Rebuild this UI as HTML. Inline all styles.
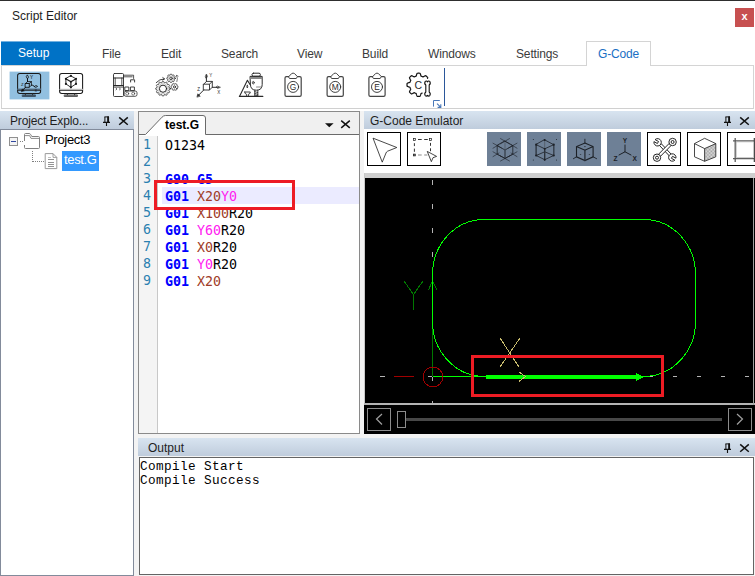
<!DOCTYPE html>
<html><head><meta charset="utf-8"><title>Script Editor</title>
<style>
html,body{margin:0;padding:0;}
body{width:755px;height:576px;position:relative;overflow:hidden;background:#fff;font-family:"Liberation Sans",sans-serif;font-size:12px;color:#1e1e1e;}
.a{position:absolute;}
.t{position:absolute;white-space:nowrap;line-height:14px;}
.tb{letter-spacing:-0.15px;}
.hdr{position:absolute;background:linear-gradient(#d8e4f0,#bfccdc);}
.code{position:absolute;left:165px;white-space:pre;font-family:"DejaVu Sans Mono","Liberation Mono",monospace;font-size:13.3px;line-height:17px;height:17px;color:#000;}
.ln{position:absolute;left:143px;width:9px;text-align:left;font-family:"DejaVu Sans Mono","Liberation Mono",monospace;font-size:13.3px;line-height:17px;height:17px;color:#2b80b0;}
.g{color:#0000ff;font-weight:bold;}
.x{color:#a03c28;}
.y{color:#ff20f0;}
.out{position:absolute;left:140px;white-space:pre;font-family:"Liberation Mono",monospace;font-size:12.7px;letter-spacing:0.38px;line-height:14px;color:#000;}
.gl{position:absolute;font-family:"Liberation Sans","NanumGothic",sans-serif;font-size:12px;line-height:14px;white-space:nowrap;}
</style></head><body>
<!-- top line -->
<div class="a" style="left:0;top:0;width:755px;height:1px;background:#2e2e2e"></div>
<div class="t" style="left:12px;top:9px;font-size:12px;color:#1e1e1e">Script Editor</div>
<!-- close -->
<div class="a" style="left:735px;top:8px;width:19px;height:19px;background:#c75050"></div>
<div class="t" style="left:735px;top:9px;width:19px;text-align:center;color:#fff;font-weight:bold;font-size:11px;line-height:14px">x</div>
<!-- tabs -->
<div class="a" style="left:1px;top:41px;width:69px;height:1px;background:#73b1e0"></div>
<div class="a" style="left:1px;top:42px;width:69px;height:23px;background:#0072c6"></div>
<div class="t" style="left:18px;top:46px;color:#fff;font-size:12px">Setup</div>
<div class="t tb" style="left:102px;top:47px;color:#3b3b3b">File</div>
<div class="t tb" style="left:161px;top:47px;color:#3b3b3b">Edit</div>
<div class="t tb" style="left:221px;top:47px;color:#3b3b3b">Search</div>
<div class="t tb" style="left:297px;top:47px;color:#3b3b3b">View</div>
<div class="t tb" style="left:362px;top:47px;color:#3b3b3b">Build</div>
<div class="t tb" style="left:428px;top:47px;color:#3b3b3b">Windows</div>
<div class="t tb" style="left:516px;top:47px;color:#3b3b3b">Settings</div>
<!-- ribbon panel -->
<div class="a" style="left:1px;top:65px;width:753px;height:44px;border:1px solid #d4d4d4;box-sizing:border-box;border-bottom-color:#d0d0d0;background:#fff"></div>
<div class="a" style="left:586px;top:41px;width:65px;height:25px;border:1px solid #d4d4d4;border-bottom:none;box-sizing:border-box;background:#fff"></div>
<div class="t tb" style="left:598px;top:47px;color:#1a6fc4">G-Code</div>
<!-- selected btn -->
<div class="a" style="left:444px;top:68px;width:1px;height:38px;background:#2b579a"></div>
<!-- below ribbon bg -->
<div class="a" style="left:0;top:111px;width:755px;height:465px;background:#f3f3f3"></div>

<!-- Project explorer -->
<div class="hdr" style="left:0;top:111px;width:134px;height:18px"></div>
<div class="t" style="left:10px;top:114px;color:#1e1e1e;letter-spacing:-0.15px">Project Explo...</div>
<div class="a" style="left:0px;top:129px;width:134px;height:447px;border:1px solid #828b9b;box-sizing:border-box;background:#fff"></div>
<div class="a" style="left:62px;top:151px;width:37px;height:20px;background:#3399ff"></div>
<div class="gl" style="left:45px;top:133px;color:#000;font-size:13px;letter-spacing:-0.3px">Project3</div>
<div class="gl" style="left:64px;top:153px;color:#fff;font-size:13px;letter-spacing:-0.35px">test.G</div>

<!-- editor -->
<div class="a" style="left:138px;top:111px;width:222px;height:323px;border:1px solid #8a8a8a;box-sizing:border-box;background:#fff"></div>
<div class="a" style="left:139px;top:112px;width:220px;height:22px;background:#f0f0f0"></div>
<div class="a" style="left:139px;top:136px;width:19px;height:297px;background:#f4f4f4;border-right:1px solid #c8c8c8;box-sizing:border-box"></div>
<div class="a" style="left:162px;top:187px;width:197px;height:17px;background:#ebebff"></div>
<div class="t" style="left:165px;top:118px;font-weight:bold;color:#000;font-size:12px;z-index:3">test.G</div>

<div class="ln" style="top:136px">1</div>
<div class="ln" style="top:153px">2</div>
<div class="ln" style="top:170px">3</div>
<div class="ln" style="top:187px">4</div>
<div class="ln" style="top:204px">5</div>
<div class="ln" style="top:221px">6</div>
<div class="ln" style="top:238px">7</div>
<div class="ln" style="top:255px">8</div>
<div class="ln" style="top:272px">9</div>
<div class="code" style="top:137px">O1234</div>
<div class="code" style="top:171px"><span class="g">G90 G5</span></div>
<div class="code" style="top:188px"><span class="g">G01</span> <span class="x">X20</span><span class="y">Y0</span></div>
<div class="code" style="top:205px"><span class="g">G01</span> <span class="x">X100</span>R20</div>
<div class="code" style="top:222px"><span class="g">G01</span> <span class="y">Y60</span>R20</div>
<div class="code" style="top:239px"><span class="g">G01</span> <span class="x">X0</span>R20</div>
<div class="code" style="top:256px"><span class="g">G01</span> <span class="y">Y0</span>R20</div>
<div class="code" style="top:273px"><span class="g">G01</span> <span class="x">X20</span></div>
<!-- red box editor -->
<div class="a" style="left:154px;top:180px;width:141px;height:30px;border:3px solid #ed1c24;box-sizing:border-box"></div>

<!-- emulator -->
<div class="hdr" style="left:364px;top:111px;width:391px;height:18px"></div>
<div class="t" style="left:370px;top:114px;color:#1e1e1e">G-Code Emulator</div>
<div class="a" style="left:364px;top:129px;width:391px;height:45px;background:#fff"></div>
<div class="a" style="left:364px;top:173px;width:391px;height:5px;background:#d0d0d0"></div>
<div class="a" style="left:364px;top:177px;width:391px;height:257px;background:#000"></div>

<!-- output -->
<div class="hdr" style="left:138px;top:438px;width:617px;height:18px"></div>
<div class="t" style="left:148px;top:441px;color:#1e1e1e">Output</div>
<div class="a" style="left:139px;top:457px;width:615px;height:118px;border:1px solid #646464;box-sizing:border-box;background:#fff"></div>
<div class="out" style="top:460px">Compile Start</div>
<div class="out" style="top:474px">Compile Success</div>

<svg class="a" id="ov" style="left:0;top:0" width="755" height="576" viewBox="0 0 755 576">
<g shape-rendering="crispEdges" fill="none" stroke-width="1">
<!-- canvas frame -->
<rect x="364" y="173" width="391" height="5" fill="#cfcfcf" stroke="none"/>
<rect x="364" y="173" width="1" height="232" fill="#c8c8c8" stroke="none"/>
<rect x="364" y="403" width="391" height="2" fill="#b4b4b4" stroke="none"/>
<rect x="753" y="178" width="1" height="227" fill="#a0a0a0" stroke="none"/>
<!-- axis dashes vertical -->
<path d="M432.5,180v5M432.5,204v5M432.5,228v5M432.5,252v5M432.5,401v2" stroke="#b4b4b4"/>
<!-- horizontal dashes -->
<path d="M380,376.5h5M649,376.5h4M673,376.5h4M697,376.5h4M721,376.5h4M745,376.5h4" stroke="#b4b4b4"/>
<!-- dark red -->
<path d="M394,376.5h20" stroke="#a00000"/>
<!-- dark green Y axis -->
<path d="M432.5,281V376" stroke="#007800"/>
<path d="M428.5,290L432.5,281L437,290" stroke="#007800"/>
<path d="M404,281L413.5,294.5L423,281M413.5,294.5V310" stroke="#007800"/>
<!-- path -->
<path d="M433,376.5H486M643,376.5A52,55 0 0 0 695.5,321.5V274.5A51.5,55 0 0 0 644,219.5H484A51.5,55 0 0 0 432.5,274.5V321.5A52,55 0 0 0 484.5,376.5" stroke="#00ff00"/>
<rect x="486" y="375" width="150" height="4" fill="#00ff00" stroke="none"/>
<path d="M636,373L643.5,377L636,381Z" fill="#00ff00" stroke="none"/>
<!-- origin -->
<circle cx="432.9" cy="377" r="9.9" stroke="#a00000"/>
<path d="M428,376.5h4M432.5,377v4" stroke="#acacac"/>
<!-- X label -->
<path d="M500,338L519,367M520,338L500,367M519,372L525.5,376.5L519,381.5" stroke="#c8bc6e"/>
<!-- red box -->
<rect x="472.5" y="356.5" width="190" height="39" stroke="#ed1c24" stroke-width="3"/>
<!-- scrollbar -->
<rect x="367.5" y="408.5" width="23" height="22" stroke="#8c8c8c"/>
<rect x="728.5" y="408.5" width="23" height="22" stroke="#8c8c8c"/>
<rect x="397.5" y="411.5" width="8" height="16" stroke="#8c8c8c"/>
<rect x="406" y="418" width="316" height="3" fill="#484848" stroke="none"/>
</g>
<g fill="none" stroke="#a0a0a0" stroke-width="1.2">
<path d="M382,414L376.5,419L382,424.5"/>
<path d="M737,414L742.5,419L737,424.5"/>
</g>
<!-- ribbon icons -->
<rect x="9.6" y="71.6" width="39.8" height="27.8" fill="#92c0e0"/>
<g fill="none" stroke="#2a2a2a" stroke-width="1" stroke-linecap="round" stroke-linejoin="round">
<!-- icon1 monitor w/ axes -->
<rect x="17.6" y="73.4" width="23" height="20" rx="2.2" stroke-width="1.05" stroke="#1a1a1a"/>
<path d="M18,89.3H40.4" stroke="#5c7890" stroke-width="1.6"/>
<path d="M18,90.3H40.4" stroke="#1a1a1a" stroke-width="0.9"/>
<rect x="22.6" y="94.9" width="12.8" height="1.6" fill="#4a6070" stroke="#2a3a48" stroke-width="0.7"/>
<path d="M25.4,93.6v1.2M32.6,93.6v1.2" stroke-width="0.9"/>
<g stroke-width="0.9" stroke="#111">
<rect x="25.5" y="83.5" width="3.8" height="3.8"/>
<path d="M25.5,83.5l2,-1.9h3.9v3.6l-2.1,2.1M29.3,83.5l2.1,-1.9" stroke-width="0.8"/>
<path d="M27.5,81.6V78.6M31.4,85.2H32.4L34.4,86.4" stroke-width="1"/>
<path d="M27.5,75.2l1.1,1.9l-1.1,1.7l-1.1,-1.7z" stroke-width="0.8"/>
<path d="M34.6,86.4l1.4,-.9l1.6,.9l-1.6,.9z" stroke-width="0.8"/>
<path d="M25.5,87.3L22.6,90.2" stroke-width="1"/>
<path d="M21.4,91.4l.7,-2.5l1.9,1.8z" fill="#111" stroke-width="0.5"/>
</g>
<!-- icon2 monitor w/ hex -->
<rect x="59.6" y="73.4" width="23" height="20" rx="2.2" stroke-width="1.05" stroke="#1a1a1a"/>
<path d="M60,89.4H82.4" stroke="#c8c8c8" stroke-width="1.2"/>
<path d="M60,90.4H82.4" stroke="#2a2a2a" stroke-width="0.9"/>
<rect x="64.6" y="94.9" width="12.8" height="1.6" fill="#8a8a8a" stroke="#333" stroke-width="0.7"/>
<path d="M67.4,93.6v1.2M74.6,93.6v1.2" stroke-width="0.9"/>
<path d="M70.9,75.9L76,78.8V83.9L70.9,87.3L65.9,83.9V78.8Z" stroke-width="0.9" stroke="#1a1a1a"/>
<path d="M70.9,87V81.7L66.2,79M70.9,81.7L75.7,79" stroke-width="1.2" stroke="#1a1a1a"/>
<g fill="#1a1a1a" stroke="none"><circle cx="70.9" cy="75.9" r="1.1"/><circle cx="76" cy="78.8" r="1.1"/><circle cx="76" cy="83.9" r="1.1"/><circle cx="70.9" cy="87.3" r="1.1"/><circle cx="65.9" cy="83.9" r="1.1"/><circle cx="65.9" cy="78.8" r="1.1"/><circle cx="70.9" cy="81.7" r="1"/></g>
<!-- icon3 factory -->
<rect x="113.5" y="73.5" width="10" height="23" rx="1" stroke-width="0.9"/>
<path d="M113.5,78H123.5M113.5,85.6H123.5" stroke-width="1.1"/>
<path d="M115.2,78v7.5M121.8,78v7.5" stroke-width="0.8"/>
<path d="M113.5,87.2H123.5" stroke-width="0.7"/>
<path d="M116,88.2l1,.8l-1,.8M119.5,88.2l1,.8l-1,.8" stroke-width="0.7"/>
<path d="M123.5,75.2H133.6V78.5M123.5,76.8H132.2" stroke-width="0.8"/>
<path d="M130.6,82V79.8H134.6V82" stroke-width="0.9"/>
<rect x="125.2" y="87" width="3.6" height="3.6" stroke-width="0.9"/>
<rect x="130.8" y="87" width="3.6" height="3.6" stroke-width="0.9"/>
<rect x="124.2" y="91" width="12.8" height="5.3" rx="1.8" stroke-width="0.8"/>
<circle cx="127.2" cy="93.6" r="1.5" stroke-width="0.6"/><circle cx="133.2" cy="93.6" r="1.5" stroke-width="0.6"/>
<!-- icon4 gears -->
<g stroke-width="0.85" stroke="#222">
<path d="M170.30,88.70L170.30,88.83L170.30,88.95L170.29,89.08L170.28,89.21L170.15,89.33L169.96,89.43L169.75,89.53L169.54,89.62L169.32,89.70L169.13,89.78L168.99,89.86L168.97,89.97L168.94,90.07L168.92,90.18L168.89,90.28L168.86,90.38L168.83,90.48L168.80,90.59L168.77,90.69L168.84,90.83L168.98,90.99L169.12,91.17L169.26,91.36L169.39,91.55L169.51,91.73L169.56,91.90L169.50,92.01L169.45,92.13L169.38,92.24L169.32,92.35L169.26,92.46L169.19,92.57L169.12,92.68L169.05,92.78L168.88,92.82L168.66,92.81L168.43,92.79L168.20,92.76L167.98,92.73L167.76,92.70L167.60,92.70L167.53,92.78L167.46,92.86L167.39,92.94L167.31,93.01L167.24,93.09L167.16,93.16L167.08,93.23L167.00,93.30L167.00,93.46L167.03,93.68L167.06,93.90L167.09,94.13L167.11,94.36L167.12,94.58L167.08,94.75L166.98,94.82L166.87,94.89L166.76,94.96L166.65,95.02L166.54,95.08L166.43,95.15L166.31,95.20L166.20,95.26L166.03,95.21L165.85,95.09L165.66,94.96L165.47,94.82L165.29,94.68L165.13,94.54L164.99,94.47L164.89,94.50L164.78,94.53L164.68,94.56L164.58,94.59L164.48,94.62L164.37,94.64L164.27,94.67L164.16,94.69L164.08,94.83L164.00,95.02L163.92,95.24L163.83,95.45L163.73,95.66L163.63,95.85L163.51,95.98L163.38,95.99L163.25,96.00L163.13,96.00L163.00,96.00L162.87,96.00L162.75,96.00L162.62,95.99L162.49,95.98L162.37,95.85L162.27,95.66L162.17,95.45L162.08,95.24L162.00,95.02L161.92,94.83L161.84,94.69L161.73,94.67L161.63,94.64L161.52,94.62L161.42,94.59L161.32,94.56L161.22,94.53L161.11,94.50L161.01,94.47L160.87,94.54L160.71,94.68L160.53,94.82L160.34,94.96L160.15,95.09L159.97,95.21L159.80,95.26L159.69,95.20L159.57,95.15L159.46,95.08L159.35,95.02L159.24,94.96L159.13,94.89L159.02,94.82L158.92,94.75L158.88,94.58L158.89,94.36L158.91,94.13L158.94,93.90L158.97,93.68L159.00,93.46L159.00,93.30L158.92,93.23L158.84,93.16L158.76,93.09L158.69,93.01L158.61,92.94L158.54,92.86L158.47,92.78L158.40,92.70L158.24,92.70L158.02,92.73L157.80,92.76L157.57,92.79L157.34,92.81L157.12,92.82L156.95,92.78L156.88,92.68L156.81,92.57L156.74,92.46L156.68,92.35L156.62,92.24L156.55,92.13L156.50,92.01L156.44,91.90L156.49,91.73L156.61,91.55L156.74,91.36L156.88,91.17L157.02,90.99L157.16,90.83L157.23,90.69L157.20,90.59L157.17,90.48L157.14,90.38L157.11,90.28L157.08,90.18L157.06,90.07L157.03,89.97L157.01,89.86L156.87,89.78L156.68,89.70L156.46,89.62L156.25,89.53L156.04,89.43L155.85,89.33L155.72,89.21L155.71,89.08L155.70,88.95L155.70,88.83L155.70,88.70L155.70,88.57L155.70,88.45L155.71,88.32L155.72,88.19L155.85,88.07L156.04,87.97L156.25,87.87L156.46,87.78L156.68,87.70L156.87,87.62L157.01,87.54L157.03,87.43L157.06,87.33L157.08,87.22L157.11,87.12L157.14,87.02L157.17,86.92L157.20,86.81L157.23,86.71L157.16,86.57L157.02,86.41L156.88,86.23L156.74,86.04L156.61,85.85L156.49,85.67L156.44,85.50L156.50,85.39L156.55,85.27L156.62,85.16L156.68,85.05L156.74,84.94L156.81,84.83L156.88,84.72L156.95,84.62L157.12,84.58L157.34,84.59L157.57,84.61L157.80,84.64L158.02,84.67L158.24,84.70L158.40,84.70L158.47,84.62L158.54,84.54L158.61,84.46L158.69,84.39L158.76,84.31L158.84,84.24L158.92,84.17L159.00,84.10L159.00,83.94L158.97,83.72L158.94,83.50L158.91,83.27L158.89,83.04L158.88,82.82L158.92,82.65L159.02,82.58L159.13,82.51L159.24,82.44L159.35,82.38L159.46,82.32L159.57,82.25L159.69,82.20L159.80,82.14L159.97,82.19L160.15,82.31L160.34,82.44L160.53,82.58L160.71,82.72L160.87,82.86L161.01,82.93L161.11,82.90L161.22,82.87L161.32,82.84L161.42,82.81L161.52,82.78L161.63,82.76L161.73,82.73L161.84,82.71L161.92,82.57L162.00,82.38L162.08,82.16L162.17,81.95L162.27,81.74L162.37,81.55L162.49,81.42L162.62,81.41L162.75,81.40L162.87,81.40L163.00,81.40L163.13,81.40L163.25,81.40L163.38,81.41L163.51,81.42L163.63,81.55L163.73,81.74L163.83,81.95L163.92,82.16L164.00,82.38L164.08,82.57L164.16,82.71L164.27,82.73L164.37,82.76L164.48,82.78L164.58,82.81L164.68,82.84L164.78,82.87L164.89,82.90L164.99,82.93L165.13,82.86L165.29,82.72L165.47,82.58L165.66,82.44L165.85,82.31L166.03,82.19L166.20,82.14L166.31,82.20L166.43,82.25L166.54,82.32L166.65,82.38L166.76,82.44L166.87,82.51L166.98,82.58L167.08,82.65L167.12,82.82L167.11,83.04L167.09,83.27L167.06,83.50L167.03,83.72L167.00,83.94L167.00,84.10L167.08,84.17L167.16,84.24L167.24,84.31L167.31,84.39L167.39,84.46L167.46,84.54L167.53,84.62L167.60,84.70L167.76,84.70L167.98,84.67L168.20,84.64L168.43,84.61L168.66,84.59L168.88,84.58L169.05,84.62L169.12,84.72L169.19,84.83L169.26,84.94L169.32,85.05L169.38,85.16L169.45,85.27L169.50,85.39L169.56,85.50L169.51,85.67L169.39,85.85L169.26,86.04L169.12,86.23L168.98,86.41L168.84,86.57L168.77,86.71L168.80,86.81L168.83,86.92L168.86,87.02L168.89,87.12L168.92,87.22L168.94,87.33L168.97,87.43L168.99,87.54L169.13,87.62L169.32,87.70L169.54,87.78L169.75,87.87L169.96,87.97L170.15,88.07L170.28,88.19L170.29,88.32L170.30,88.45L170.30,88.57L170.30,88.70Z"/>
<circle cx="163" cy="88.7" r="3.6" stroke-width="1"/>
<circle cx="163" cy="88.7" r="5" stroke-width="0.5" stroke="#999"/>
<path d="M175.20,78.30L175.20,78.41L175.19,78.52L175.19,78.63L175.18,78.74L175.08,78.84L174.95,78.93L174.80,79.00L174.65,79.08L174.50,79.14L174.36,79.20L174.26,79.27L174.23,79.35L174.20,79.43L174.17,79.52L174.14,79.60L174.11,79.68L174.07,79.76L174.03,79.84L173.99,79.92L174.01,80.04L174.07,80.18L174.13,80.33L174.19,80.49L174.23,80.65L174.27,80.81L174.26,80.94L174.19,81.03L174.12,81.11L174.05,81.19L173.97,81.27L173.89,81.35L173.81,81.42L173.73,81.49L173.64,81.56L173.51,81.57L173.35,81.53L173.19,81.49L173.03,81.43L172.88,81.37L172.74,81.31L172.62,81.29L172.54,81.33L172.46,81.37L172.38,81.41L172.30,81.44L172.22,81.47L172.13,81.50L172.05,81.53L171.97,81.56L171.90,81.66L171.84,81.80L171.78,81.95L171.70,82.10L171.63,82.25L171.54,82.38L171.44,82.48L171.33,82.49L171.22,82.49L171.11,82.50L171.00,82.50L170.89,82.50L170.78,82.49L170.67,82.49L170.56,82.48L170.46,82.38L170.37,82.25L170.30,82.10L170.22,81.95L170.16,81.80L170.10,81.66L170.03,81.56L169.95,81.53L169.87,81.50L169.78,81.47L169.70,81.44L169.62,81.41L169.54,81.37L169.46,81.33L169.38,81.29L169.26,81.31L169.12,81.37L168.97,81.43L168.81,81.49L168.65,81.53L168.49,81.57L168.36,81.56L168.27,81.49L168.19,81.42L168.11,81.35L168.03,81.27L167.95,81.19L167.88,81.11L167.81,81.03L167.74,80.94L167.73,80.81L167.77,80.65L167.81,80.49L167.87,80.33L167.93,80.18L167.99,80.04L168.01,79.92L167.97,79.84L167.93,79.76L167.89,79.68L167.86,79.60L167.83,79.52L167.80,79.43L167.77,79.35L167.74,79.27L167.64,79.20L167.50,79.14L167.35,79.08L167.20,79.00L167.05,78.93L166.92,78.84L166.82,78.74L166.81,78.63L166.81,78.52L166.80,78.41L166.80,78.30L166.80,78.19L166.81,78.08L166.81,77.97L166.82,77.86L166.92,77.76L167.05,77.67L167.20,77.60L167.35,77.52L167.50,77.46L167.64,77.40L167.74,77.33L167.77,77.25L167.80,77.17L167.83,77.08L167.86,77.00L167.89,76.92L167.93,76.84L167.97,76.76L168.01,76.68L167.99,76.56L167.93,76.42L167.87,76.27L167.81,76.11L167.77,75.95L167.73,75.79L167.74,75.66L167.81,75.57L167.88,75.49L167.95,75.41L168.03,75.33L168.11,75.25L168.19,75.18L168.27,75.11L168.36,75.04L168.49,75.03L168.65,75.07L168.81,75.11L168.97,75.17L169.12,75.23L169.26,75.29L169.38,75.31L169.46,75.27L169.54,75.23L169.62,75.19L169.70,75.16L169.78,75.13L169.87,75.10L169.95,75.07L170.03,75.04L170.10,74.94L170.16,74.80L170.22,74.65L170.30,74.50L170.37,74.35L170.46,74.22L170.56,74.12L170.67,74.11L170.78,74.11L170.89,74.10L171.00,74.10L171.11,74.10L171.22,74.11L171.33,74.11L171.44,74.12L171.54,74.22L171.63,74.35L171.70,74.50L171.78,74.65L171.84,74.80L171.90,74.94L171.97,75.04L172.05,75.07L172.13,75.10L172.22,75.13L172.30,75.16L172.38,75.19L172.46,75.23L172.54,75.27L172.62,75.31L172.74,75.29L172.88,75.23L173.03,75.17L173.19,75.11L173.35,75.07L173.51,75.03L173.64,75.04L173.73,75.11L173.81,75.18L173.89,75.25L173.97,75.33L174.05,75.41L174.12,75.49L174.19,75.57L174.26,75.66L174.27,75.79L174.23,75.95L174.19,76.11L174.13,76.27L174.07,76.42L174.01,76.56L173.99,76.68L174.03,76.76L174.07,76.84L174.11,76.92L174.14,77.00L174.17,77.08L174.20,77.17L174.23,77.25L174.26,77.33L174.36,77.40L174.50,77.46L174.65,77.52L174.80,77.60L174.95,77.67L175.08,77.76L175.18,77.86L175.19,77.97L175.19,78.08L175.20,78.19L175.20,78.30Z"/>
<circle cx="171" cy="78.3" r="1.3"/>
<circle cx="171" cy="78.3" r="2.5" stroke-width="0.5" stroke="#999"/>
<path d="M177.01,88.35L176.97,88.42L176.93,88.48L176.89,88.54L176.85,88.60L176.80,88.67L176.77,88.74L176.77,88.84L176.77,88.94L176.77,89.05L176.76,89.16L176.75,89.28L176.74,89.39L176.72,89.50L176.69,89.61L176.63,89.68L176.56,89.73L176.48,89.78L176.41,89.84L176.33,89.88L176.25,89.93L176.17,89.98L176.09,90.02L176.01,90.06L175.92,90.10L175.84,90.13L175.75,90.15L175.64,90.12L175.53,90.08L175.43,90.04L175.33,89.99L175.23,89.94L175.13,89.88L175.04,89.83L174.96,89.78L174.88,89.78L174.80,89.78L174.73,89.79L174.65,89.80L174.58,89.80L174.50,89.80L174.42,89.80L174.35,89.80L174.27,89.79L174.20,89.78L174.12,89.78L174.04,89.78L173.96,89.83L173.87,89.88L173.77,89.94L173.67,89.99L173.57,90.04L173.47,90.08L173.36,90.12L173.25,90.15L173.16,90.13L173.08,90.10L172.99,90.06L172.91,90.02L172.83,89.98L172.75,89.93L172.67,89.88L172.59,89.84L172.52,89.78L172.44,89.73L172.37,89.68L172.31,89.61L172.28,89.50L172.26,89.39L172.25,89.28L172.24,89.16L172.23,89.05L172.23,88.94L172.23,88.84L172.23,88.74L172.20,88.67L172.15,88.60L172.11,88.54L172.07,88.48L172.03,88.42L171.99,88.35L171.95,88.28L171.92,88.22L171.88,88.15L171.85,88.08L171.82,88.01L171.78,87.95L171.69,87.90L171.60,87.84L171.50,87.79L171.41,87.73L171.32,87.66L171.22,87.60L171.14,87.52L171.06,87.44L171.03,87.36L171.02,87.27L171.01,87.17L171.00,87.08L171.00,86.99L171.00,86.90L171.00,86.81L171.00,86.72L171.01,86.63L171.02,86.53L171.03,86.44L171.06,86.36L171.14,86.28L171.22,86.20L171.32,86.14L171.41,86.07L171.50,86.01L171.60,85.96L171.69,85.90L171.78,85.85L171.82,85.79L171.85,85.72L171.88,85.65L171.92,85.58L171.95,85.52L171.99,85.45L172.03,85.38L172.07,85.32L172.11,85.26L172.15,85.20L172.20,85.13L172.23,85.06L172.23,84.96L172.23,84.86L172.23,84.75L172.24,84.64L172.25,84.52L172.26,84.41L172.28,84.30L172.31,84.19L172.37,84.12L172.44,84.07L172.52,84.02L172.59,83.96L172.67,83.92L172.75,83.87L172.83,83.82L172.91,83.78L172.99,83.74L173.08,83.70L173.16,83.67L173.25,83.65L173.36,83.68L173.47,83.72L173.57,83.76L173.67,83.81L173.77,83.86L173.87,83.92L173.96,83.97L174.04,84.02L174.12,84.02L174.20,84.02L174.27,84.01L174.35,84.00L174.42,84.00L174.50,84.00L174.58,84.00L174.65,84.00L174.73,84.01L174.80,84.02L174.88,84.02L174.96,84.02L175.04,83.97L175.13,83.92L175.23,83.86L175.33,83.81L175.43,83.76L175.53,83.72L175.64,83.68L175.75,83.65L175.84,83.67L175.92,83.70L176.01,83.74L176.09,83.78L176.17,83.82L176.25,83.87L176.33,83.92L176.41,83.96L176.48,84.02L176.56,84.07L176.63,84.12L176.69,84.19L176.72,84.30L176.74,84.41L176.75,84.52L176.76,84.64L176.77,84.75L176.77,84.86L176.77,84.96L176.77,85.06L176.80,85.13L176.85,85.20L176.89,85.26L176.93,85.32L176.97,85.38L177.01,85.45L177.05,85.52L177.08,85.58L177.12,85.65L177.15,85.72L177.18,85.79L177.22,85.85L177.31,85.90L177.40,85.96L177.50,86.01L177.59,86.07L177.68,86.14L177.78,86.20L177.86,86.28L177.94,86.36L177.97,86.44L177.98,86.53L177.99,86.63L178.00,86.72L178.00,86.81L178.00,86.90L178.00,86.99L178.00,87.08L177.99,87.17L177.98,87.27L177.97,87.36L177.94,87.44L177.86,87.52L177.78,87.60L177.68,87.66L177.59,87.73L177.50,87.79L177.40,87.84L177.31,87.90L177.22,87.95L177.18,88.01L177.15,88.08L177.12,88.15L177.08,88.22L177.05,88.28L177.01,88.35Z"/>
<circle cx="174.5" cy="86.9" r="1.1"/>

<path d="M156.2,82.6Q159.4,78.9 164.2,78.9M162.8,77.6l1.8,1.3l-1.9,1.1"/>
<path d="M176.9,81.6Q178.2,78.4 176.7,75.6M175.7,76.6l1,-1.3l1.4,.8" stroke-width="0.6"/>
</g>
<!-- icon5 axis cube -->
<g stroke-width="0.9">
<rect x="203.7" y="84.2" width="5.8" height="5.8"/>
<path d="M203.7,84.2l2.8,-2.8h5.8v5.8l-2.8,2.8M209.5,84.2l2.8,-2.8" />
<path d="M206.4,81.4V75.5M212.3,87.3H218.5M203.7,90L198.2,95.6" stroke-width="1"/>
<path d="M205.3,76.6l1.1,-2.6l1.1,2.6l-1.1,1.4zM217.6,86.2l2.8,1.1l-2.8,1.1l-1.2,-1.1z" stroke-width="0.7"/>
<path d="M197,96.8l.8,-3l2.2,2.2z" fill="#2a2a2a" stroke-width="0.6"/>
</g>
<!-- icon6 drill -->
<g stroke-width="1">
<path d="M239.4,96.4H262.8" stroke-width="1.2"/>
<path d="M239.6,96.2L247.4,80.2L250,84.5" stroke-width="1.1"/>
<rect x="252" y="73.2" width="8.4" height="3" rx="1.4"/>
<path d="M250.4,76.4H262.2V84.5Q262.2,90.2 256.3,90.2Q250.4,90.2 250.4,84.5Z"/>
<path d="M251,78H261.6" stroke="#888" stroke-width="1.8"/>
<ellipse cx="253.3" cy="82.7" rx=".9" ry="1.3" stroke-width="0.8"/>
<path d="M256.5,87H261.2" stroke="#888" stroke-width="1.2"/>
<path d="M254.8,90.4V96M257.8,90.4V96" stroke-width="0.9"/>
<path d="M254.8,91.6l3,1M254.8,93.4l3,1M254.8,95l3,.8" stroke-width="0.8"/>
<path d="M247.3,85.4q1.2,1.8 0,2.6q-1.2,-.8 0,-2.6z" stroke-width="0.8"/>
<path d="M244.7,92H250.3Q250.3,94 248.4,94.3V96.2M244.7,92Q244.7,94 246.6,94.3V96.2" stroke-width="0.9"/>
</g>
<!-- clipboards -->
<g id="cb" stroke="#444" stroke-width="1.2">
<path d="M288.6,76.6H286.4Q285,76.6 285,78V95Q285,96.4 286.4,96.4H299.8Q301.2,96.4 301.2,95V78Q301.2,76.6 299.8,76.6H297.6"/>
<path d="M288.8,76.6L291.6,73.6Q293.1,72.6 294.6,73.6L297.4,76.6L296.3,78.5H289.9Z" stroke-width="1"/>
<circle cx="293.1" cy="86.9" r="5.5" stroke-width="0.9" stroke="#2a2a2a"/>
</g>
<g stroke="#444" stroke-width="1.2" transform="translate(42.1,0)">
<path d="M288.6,76.6H286.4Q285,76.6 285,78V95Q285,96.4 286.4,96.4H299.8Q301.2,96.4 301.2,95V78Q301.2,76.6 299.8,76.6H297.6"/>
<path d="M288.8,76.6L291.6,73.6Q293.1,72.6 294.6,73.6L297.4,76.6L296.3,78.5H289.9Z" stroke-width="1"/>
<circle cx="293.1" cy="86.9" r="5.5" stroke-width="0.9" stroke="#2a2a2a"/>
</g>
<g stroke="#444" stroke-width="1.2" transform="translate(83.9,0)">
<path d="M288.6,76.6H286.4Q285,76.6 285,78V95Q285,96.4 286.4,96.4H299.8Q301.2,96.4 301.2,95V78Q301.2,76.6 299.8,76.6H297.6"/>
<path d="M288.8,76.6L291.6,73.6Q293.1,72.6 294.6,73.6L297.4,76.6L296.3,78.5H289.9Z" stroke-width="1"/>
<circle cx="293.1" cy="86.9" r="5.5" stroke-width="0.9" stroke="#2a2a2a"/>
</g>
<!-- gear C -->
<g stroke-width="1.2" stroke="#111">
<path d="M427.52,78.32L427.65,77.96L427.72,77.64L427.59,77.47L427.45,77.30L427.31,77.14L427.16,76.97L427.01,76.82L426.86,76.66L426.71,76.51L426.55,76.36L426.40,76.21L426.23,76.07L426.07,75.92L425.90,75.79L425.73,75.66L425.37,75.77L425.01,75.91L424.65,76.07L424.29,76.25L423.94,76.44L423.61,76.63L423.29,76.82L423.01,76.96L422.87,76.88L422.72,76.80L422.57,76.72L422.42,76.65L422.26,76.58L422.11,76.51L421.95,76.45L421.80,76.39L421.64,76.33L421.48,76.27L421.32,76.22L421.16,76.17L421.00,76.12L420.91,75.78L420.82,75.42L420.72,75.05L420.60,74.67L420.47,74.29L420.33,73.92L420.17,73.57L419.99,73.28L419.77,73.26L419.56,73.24L419.34,73.22L419.13,73.21L418.91,73.20L418.69,73.20L418.48,73.20L418.26,73.21L418.04,73.21L417.83,73.23L417.61,73.24L417.39,73.26L417.18,73.29L417.01,73.62L416.85,73.97L416.71,74.34L416.58,74.72L416.47,75.10L416.37,75.47L416.28,75.83L416.18,76.13L416.02,76.18L415.86,76.23L415.70,76.28L415.54,76.34L415.38,76.40L415.22,76.46L415.07,76.52L414.91,76.59L414.76,76.66L414.61,76.73L414.46,76.81L414.31,76.89L414.16,76.97L413.87,76.79L413.55,76.60L413.21,76.41L412.86,76.23L412.50,76.05L412.14,75.89L411.78,75.75L411.44,75.67L411.27,75.81L411.11,75.94L410.94,76.09L410.78,76.23L410.62,76.38L410.47,76.53L410.31,76.68L410.16,76.84L410.02,77.00L409.87,77.16L409.73,77.32L409.59,77.49L409.46,77.66L409.56,78.01L409.70,78.37L409.87,78.73L410.04,79.09L410.23,79.44L410.42,79.78L410.61,80.10L410.76,80.38L410.68,80.53L410.60,80.68L410.53,80.83L410.45,80.98L410.38,81.13L410.32,81.28L410.25,81.44L410.19,81.60L410.13,81.75L410.08,81.91L410.02,82.07L409.97,82.23L409.93,82.39L409.60,82.48L409.24,82.58L408.87,82.68L408.49,82.79L408.11,82.92L407.74,83.07L407.39,83.22L407.08,83.40L407.06,83.62L407.04,83.83L407.02,84.05L407.01,84.26L407.00,84.48L407.00,84.70L407.00,84.91L407.00,85.13L407.01,85.35L407.03,85.56L407.04,85.78L407.06,86.00L407.09,86.21L407.40,86.39L407.76,86.54L408.13,86.68L408.51,86.81L408.89,86.93L409.26,87.03L409.62,87.12L409.93,87.21L409.98,87.37L410.03,87.54L410.08,87.70L410.13,87.85L410.19,88.01L410.25,88.17L410.32,88.32L410.39,88.48L410.46,88.63L410.53,88.78L410.60,88.93L410.68,89.08L410.76,89.23L410.60,89.52L410.41,89.84L410.22,90.18L410.03,90.53L409.86,90.88L409.70,91.25L409.56,91.61L409.46,91.95L409.60,92.12L409.74,92.28L409.88,92.45L410.02,92.61L410.17,92.77L410.32,92.93L410.47,93.08L410.63,93.23L410.79,93.38L410.95,93.52L411.12,93.66L411.28,93.80L411.45,93.94L411.80,93.84L412.16,93.70L412.52,93.54L412.88,93.36L413.23,93.18L413.56,92.99L413.88,92.80L414.17,92.64L414.32,92.72L414.47,92.80L414.62,92.87L414.77,92.94L414.92,93.01L415.08,93.08L415.23,93.15L415.39,93.21L415.55,93.27L415.71,93.32L415.86,93.37L416.03,93.42L416.19,93.47L416.28,93.79L416.37,94.14L416.47,94.52L416.59,94.90L416.72,95.28L416.86,95.65L417.02,96.00L417.19,96.31L417.41,96.34L417.62,96.36L417.84,96.37L418.05,96.39L418.27,96.40L418.49,96.40L418.70,96.40L418.92,96.40L419.14,96.39L419.35,96.38L419.57,96.36L419.79,96.34L420.00,96.32L420.18,96.01L420.34,95.66L420.48,95.29L420.61,94.91L420.72,94.53L420.82,94.16L420.92,93.80L421.01,93.47L421.17,93.43L421.33,93.38L421.49,93.32L421.65,93.27L421.80,93.21L421.96,93.15L422.12,93.08"/>
<path d="M425.2,81.4Q424,83.6 425.8,85V92Q424,93.4 425.2,95.6Q426.4,96.6 427.5,95.4Q428.6,96.6 429.8,95.6Q431,93.4 429.2,92V85Q431,83.6 429.8,81.4Q428.6,80.4 427.5,81.8Q426.4,80.4 425.2,81.4Z" fill="#fff" stroke-width="1.1"/>
</g>
</g>
<g font-family="Liberation Sans, sans-serif" font-weight="bold" fill="#2a2a2a" text-anchor="middle">
<text x="293.1" y="89.8" font-size="8.4" font-weight="normal">G</text>
<text x="335.2" y="89.8" font-size="8.4" font-weight="normal">M</text>
<text x="377" y="89.8" font-size="8.4" font-weight="normal">E</text>
<text x="418.4" y="88.6" font-size="10.5" font-weight="normal">C</text>
<text x="210.7" y="77.3" font-size="4.5" font-weight="normal">Y</text>
<text x="218.7" y="94.4" font-size="4.5" font-weight="normal">X</text>
<text x="198.6" y="91.4" font-size="4.5" font-weight="normal">Z</text>
<text x="31.6" y="78.7" font-size="4.6" font-weight="normal" fill="#000">Y</text>
<text x="22.4" y="86.3" font-size="4.2" font-weight="normal" fill="#000">Z</text>
<text x="35.8" y="91.7" font-size="3.2" font-weight="normal" fill="#000">X</text>
</g>
<!-- launcher -->
<g fill="none" stroke="#4a78b8" stroke-width="1">
<path d="M433.5,106.6V100.5H439.8"/>
<path d="M437,103.6L440.6,107.2M440.8,104.2V107.4H437.6" stroke-width="1.1"/>
</g>
<!-- emulator toolbar -->
<g shape-rendering="crispEdges" fill="#fff" stroke="#000" stroke-width="1">
<rect x="367.5" y="132.5" width="33" height="33"/>
<rect x="407.5" y="132.5" width="33" height="33"/>
<rect x="647.5" y="132.5" width="33" height="33"/>
<rect x="687.5" y="132.5" width="33" height="33"/>
<path d="M755,132.5H727.5V165.5H755"/>
</g>
<g shape-rendering="crispEdges" fill="#6e8096" stroke="none">
<rect x="487" y="132" width="34" height="34"/>
<rect x="527" y="132" width="34" height="34"/>
<rect x="567" y="132" width="34" height="34"/>
<rect x="607" y="132" width="34" height="34"/>
</g>
<g fill="none" stroke="#1a1a1a" stroke-width="0.8" stroke-linejoin="round" stroke-linecap="round">
<!-- btn1 cursor -->
<path d="M373.4,138.3L396.8,147.5L387.6,151.2Q386.4,151.8 386,153L382.4,161.8Z"/>
<!-- btn2 -->
<path d="M418,139.5H421.7M424.2,139.5H427.8M430.5,142.9V145.8M430.5,148.3V151.2M414.4,143.2V146.1M414.4,148.6V151.8" stroke-width="0.9" stroke-linecap="butt"/>
<path d="M418,155H421.7M424.2,155H427.4" stroke="#8a8a8a" stroke-width="1.1" stroke-linecap="butt"/>
<rect x="413.5" y="138.6" width="1.8" height="1.8" stroke-width="0.7" stroke-linejoin="miter"/>
<rect x="429.6" y="138.6" width="1.8" height="1.8" stroke-width="0.7" stroke-linejoin="miter"/>
<rect x="413.5" y="154.1" width="1.8" height="1.8" stroke-width="0.7" fill="#777" stroke-linejoin="miter"/>
<path d="M427.6,151.6L436.6,156.4L433,157.7L431.5,161.3Z" fill="#fff"/>
</g>
<!-- btn3 iso cube w/ ticks -->
<g fill="none" stroke="#1c2026" stroke-width="0.8" stroke-linecap="round">
<path d="M505,141.2L512.8,145.6V154.2L505,158.4L497.2,154.2V145.6ZM497.2,145.6L505,150L512.8,145.6"/>
<path d="M505,150V158.4" stroke-width="1.4" stroke="#3a4450"/>
<path d="M505,142.5V149" stroke-width="1" stroke="#55606e"/>
<g stroke-width="0.6">
<path d="M500.5,138.6L509.5,143.8M509.5,138.6L500.5,143.8M493,143.2L501.5,148M493,148.2L499,144.6M517,143.2L508.5,148M517,148.2L511,144.6M493,151.8L501.5,156.6M493,156.6L499,153M517,151.8L508.5,156.6M517,156.6L511,153M500.5,156L509.5,161M509.5,156L500.5,161"/>
</g>
<!-- btn4 cube w/ nodes -->
<path d="M544.7,139.9L553.7,144.7V155.5L544.7,159.7L536.2,155.5V144.7ZM536.2,144.7L544.7,148.8L553.7,144.7M536.2,155.5L544.7,151.8L553.7,155.5"/>
<path d="M544.7,148.8V159.7" stroke-width="1.4" stroke="#2c333c"/>
<path d="M536.2,145.5V155M553.7,145.5V155" stroke-width="1.4" stroke="#3a4450"/>
<path d="M544.7,141V147" stroke-width="1" stroke="#55606e"/>
<g fill="#1c2026" stroke="none"><circle cx="544.7" cy="139.9" r="1"/><circle cx="536.2" cy="144.7" r="1.1"/><circle cx="553.7" cy="144.7" r="1.1"/><circle cx="544.7" cy="148.8" r="1"/><circle cx="536.2" cy="155.5" r="1.1"/><circle cx="553.7" cy="155.5" r="1.1"/><circle cx="544.7" cy="159.7" r="1"/>
<circle cx="533.3" cy="139.5" r=".5"/><circle cx="556.5" cy="139.5" r=".5"/><circle cx="533.3" cy="160" r=".5"/><circle cx="556.5" cy="160" r=".5"/></g>
<!-- btn5 cube -->
<path d="M584.9,143.1L593.1,146.6V156.8L584.9,160.6L576.5,156.8V146.6ZM576.5,146.6L584.9,150.2L593.1,146.6" stroke-width="1.1"/>
<path d="M584.9,150.2V160.6" stroke-width="1.4" stroke="#2c333c"/>
<path d="M584.9,139.2V143.1M576.5,156.8L573.4,158.7M593.1,156.8L596.6,158.7" stroke-width="0.9"/>
<path d="M584.4,146.6h1M580.3,154.5h.5M589.2,154.5h.5" stroke-width="0.6"/>
<!-- btn6 axes -->
<path d="M625,145V151.8L619,155M625,151.8L631,155" stroke-width="1"/>
</g>
<g font-family="Liberation Sans, sans-serif" font-weight="bold" fill="#1c2026" text-anchor="middle" font-size="6.6">
<text x="625" y="142.8">Y</text>
<text x="615.4" y="161.4">Z</text>
<text x="634.8" y="161.4">X</text>
</g>
<!-- btn7 wrenches -->
<g fill="#fff" stroke="#1a1a1a" stroke-width="0.95" stroke-linejoin="round">
<path d="M659.6,145.6L661.4,143.8L671.4,154.4L669.6,156.2Z"/>
<path d="M655.07,139.60A3.70,3.70 0 1 1 653.96,141.61L657.40,143.50L658.50,141.49Z"/>
<path d="M674.83,160.20A3.70,3.70 0 1 1 675.94,158.19L672.50,156.30L671.40,158.31Z"/>
<path d="M669.4,143.2L671.4,145.2L660.2,156.6L658.2,154.6Z"/>
<circle cx="672.6" cy="142" r="3.7"/><circle cx="672.6" cy="142" r="1.5"/>
<circle cx="657" cy="157.7" r="3.7"/><circle cx="657" cy="157.7" r="1.5"/>
</g>
<!-- btn8 cube shaded -->
<defs><pattern id="dots" width="1.4" height="1.4" patternUnits="userSpaceOnUse"><rect width="1.4" height="1.4" fill="#e6e6e6"/><rect width=".7" height=".7" fill="#9a9a9a"/><rect x=".7" y=".7" width=".7" height=".7" fill="#9a9a9a"/></pattern></defs>
<path d="M704.6,148.6L715.8,143.6V156.8L704.6,161.3Z" fill="url(#dots)" stroke="none"/>
<path d="M704.6,138.3L715.8,143.6V156.8L704.6,161.3L694.5,156.8V143.6ZM694.5,143.6L704.6,148.6L715.8,143.6M704.6,148.6V161.3" fill="none" stroke="#1a1a1a" stroke-width="0.8" stroke-linejoin="round"/>
<!-- btn9 frame -->
<g fill="none" stroke="#5a5a5a" stroke-width="1.3">
<path d="M735.2,138V162M733,140.8H755M733,158.6H755"/>
<path d="M754.4,138V162" stroke="#4a4a4a" stroke-width="1.4"/>
</g>
<g fill="none" stroke="#b0b0b0" stroke-width="0.7"><path d="M736.3,141.8V157.6M736.3,141.8H753M736.3,157.6H753"/></g>
<!-- pins and close X for panel headers -->
<g id="pinx" fill="none" stroke="#111" stroke-width="1.2">
<path d="M104.4,116.9H109M104.9,117V122" stroke-width="1"/>
<path d="M108.1,116.5V122" stroke-width="1.9"/>
<path d="M103,122.4H110M106.5,122.4V126" stroke-width="1.1"/>
<path d="M119.2,117.4L127.8,124.8M127.8,117.4L119.2,124.8" stroke-width="1.5"/>
</g>
<g fill="none" stroke="#111" transform="translate(621,0)">
<path d="M104.4,116.9H109M104.9,117V122" stroke-width="1"/>
<path d="M108.1,116.5V122" stroke-width="1.9"/>
<path d="M103,122.4H110M106.5,122.4V126" stroke-width="1.1"/>
<path d="M119.2,117.4L127.8,124.8M127.8,117.4L119.2,124.8" stroke-width="1.5"/>
</g>
<g fill="none" stroke="#111" transform="translate(621,327)">
<path d="M104.4,116.9H109M104.9,117V122" stroke-width="1"/>
<path d="M108.1,116.5V122" stroke-width="1.9"/>
<path d="M103,122.4H110M106.5,122.4V126" stroke-width="1.1"/>
<path d="M119.2,117.4L127.8,124.8M127.8,117.4L119.2,124.8" stroke-width="1.5"/>
</g>
<!-- editor tab strip -->
<path d="M139,134.5H145.5L162,117.2Q163.4,115.6 165.4,115.5H203Q205.5,115.5 205.5,118V134.5H359V136H139Z" fill="#fff" stroke="none"/>
<path d="M139,134.5H145.5L162,117.2Q163.4,115.6 165.4,115.5H203Q205.5,115.5 205.5,118V134.5H359" fill="none" stroke="#6a6a6a" stroke-width="1"/>
<path d="M325,123.2H333.6L329.3,127.2Z" fill="#111"/>
<path d="M341.2,120.6L349.8,127.8M349.8,120.6L341.2,127.8" stroke="#111" stroke-width="1.5" fill="none"/>
<!-- tree -->
<g shape-rendering="crispEdges">
<rect x="9.5" y="137.5" width="8" height="8" rx="1" fill="#f4f4f4" stroke="#909090"/>
<rect x="11" y="141" width="5" height="1" fill="#3048a0"/>
<path d="M19.5,141.5H24" stroke="#808080" stroke-dasharray="1 1" fill="none"/>
<path d="M32.5,151V162M32.5,161.5H44" stroke="#808080" stroke-dasharray="1 1" fill="none"/>
</g>
<g fill="#fff" stroke="#808080" stroke-width="1" stroke-linejoin="round">
<path d="M24.5,141V134.5Q24.5,133.5 25.5,133.5H29Q30,133.5 30.6,134.4L31.8,136.5H38.5Q39.5,136.5 39.5,137.5V147.5Q39.5,148.5 38.5,148.5H25.5Q24.5,148.5 24.5,147.5V145"/>
<path d="M25,135.6H29.6L31,138.4H39.5" fill="none" stroke-width="0.9"/>
<path d="M45.2,153.6H53L56.8,157.4V168.6H45.2Z" stroke="#9a9a9a"/>
<path d="M53,153.6V157.4H56.8" fill="none" stroke="#8a8a8a" stroke-width="0.8"/>
</g>
<g stroke="#888" stroke-width="0.9" shape-rendering="crispEdges"><path d="M48,159.5H54M48,162.5H54M48,164.5H54M48,166.5H54"/><path d="M48,157.5H51" stroke="#bbb"/></g>

</svg>
</body></html>
